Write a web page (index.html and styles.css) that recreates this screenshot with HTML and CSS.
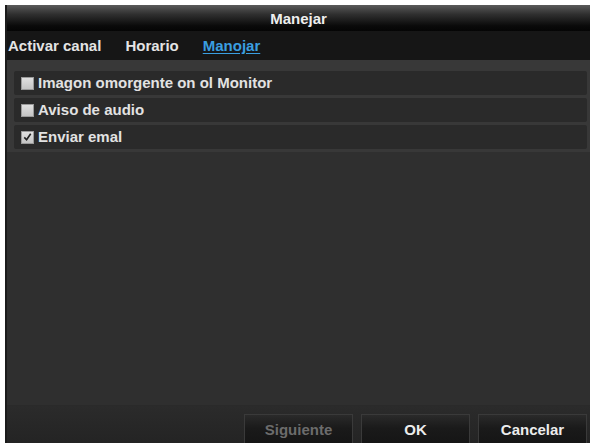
FILE: index.html
```html
<!DOCTYPE html>
<html lang="es">
<head>
<meta charset="utf-8">
<title>Manejar</title>
<link rel="stylesheet" href="styles.css">
</head>
<body>
<div class="window">
  <div class="titlebar">Manejar</div>
  <div class="tabs">
    <span class="tab">Activar canal</span>
    <span class="tab">Horario</span>
    <span class="tab active">Manojar</span>
  </div>
  <div class="content">
    <div class="list">
      <div class="row"><span class="check"></span><span class="label">Imagon omorgente on ol Monitor</span></div>
      <div class="row"><span class="check"></span><span class="label">Aviso de audio</span></div>
      <div class="row"><span class="check checked"><svg viewBox="0 0 12 12" width="12" height="12"><path d="M2.5 6.5 L5 9 L9.5 2.5" fill="none" stroke="#222" stroke-width="1.8"/></svg></span><span class="label">Enviar emal</span></div>
    </div>
  </div>
  <div class="footer">
    <div class="btn disabled">Siguiente</div>
    <div class="btn">OK</div>
    <div class="btn">Cancelar</div>
  </div>
</div>
</body>
</html>
```
FILE: styles.css
```css
html, body {
  margin: 0;
  padding: 0;
  background: #ffffff;
  overflow: hidden;
}
body {
  font-family: "Liberation Sans", Arial, sans-serif;
  font-weight: bold;
  font-size: 15px;
}
.window {
  margin: 5px 0 0 5px;
  width: 585px;
  height: 438px;
  display: flex;
  flex-direction: column;
  background: #2f2f2f;
  border-left: 2px solid #1b1b1b;
  box-sizing: border-box;
}
.titlebar {
  height: 23px;
  padding-top: 3px;
  line-height: 21px;
  text-align: center;
  color: #eeeeee;
  background: linear-gradient(#5a5a5a 0%, #303030 35%, #0a0a0a 80%, #050505 100%);
}
.tabs {
  height: 29px;
  background: #161616;
  display: flex;
  gap: 24px;
  padding-left: 1px;
  padding-top: 3px;
  box-sizing: border-box;
  line-height: 24px;
}
.tab {
  color: #e4e4e4;
}
.tab.active {
  color: #3a9ee0;
  text-decoration: underline;
  text-underline-offset: 2px;
}
.content {
  flex: 1;
  background: #2f2f2f;
}
.list {
  background: #383838;
  padding: 11px 3px 3px 7px;
  display: flex;
  flex-direction: column;
  gap: 3px;
}
.row {
  height: 24px;
  background: #2a2a2a;
  display: flex;
  align-items: center;
  padding-left: 7px;
  gap: 4px;
  border-radius: 2px;
}
.check {
  width: 13px;
  height: 13px;
  background: linear-gradient(#e0e0e0, #c4c4c4);
  box-sizing: border-box;
  border: 1px solid #9a9a9a;
  display: flex;
  align-items: center;
  justify-content: center;
}
.check svg {
  display: block;
}
.label {
  color: #e2e2e2;
  line-height: 24px;
}
.footer {
  height: 38px;
  background: linear-gradient(#2b2b2b, #242424);
  border-top: 1px solid #2a2a2a;
  display: flex;
  justify-content: flex-end;
  gap: 8px;
  padding: 8px 3px 0 0;
  box-sizing: border-box;
}
.btn {
  width: 109px;
  height: 34px;
  box-sizing: border-box;
  border: 1px solid #3a3a3a;
  border-bottom: none;
  background: linear-gradient(#2a2a2a, #1a1a1a 40%, #141414);
  color: #ececec;
  text-align: center;
  line-height: 30px;
}
.btn.disabled {
  color: #6c6c6c;
}
```
